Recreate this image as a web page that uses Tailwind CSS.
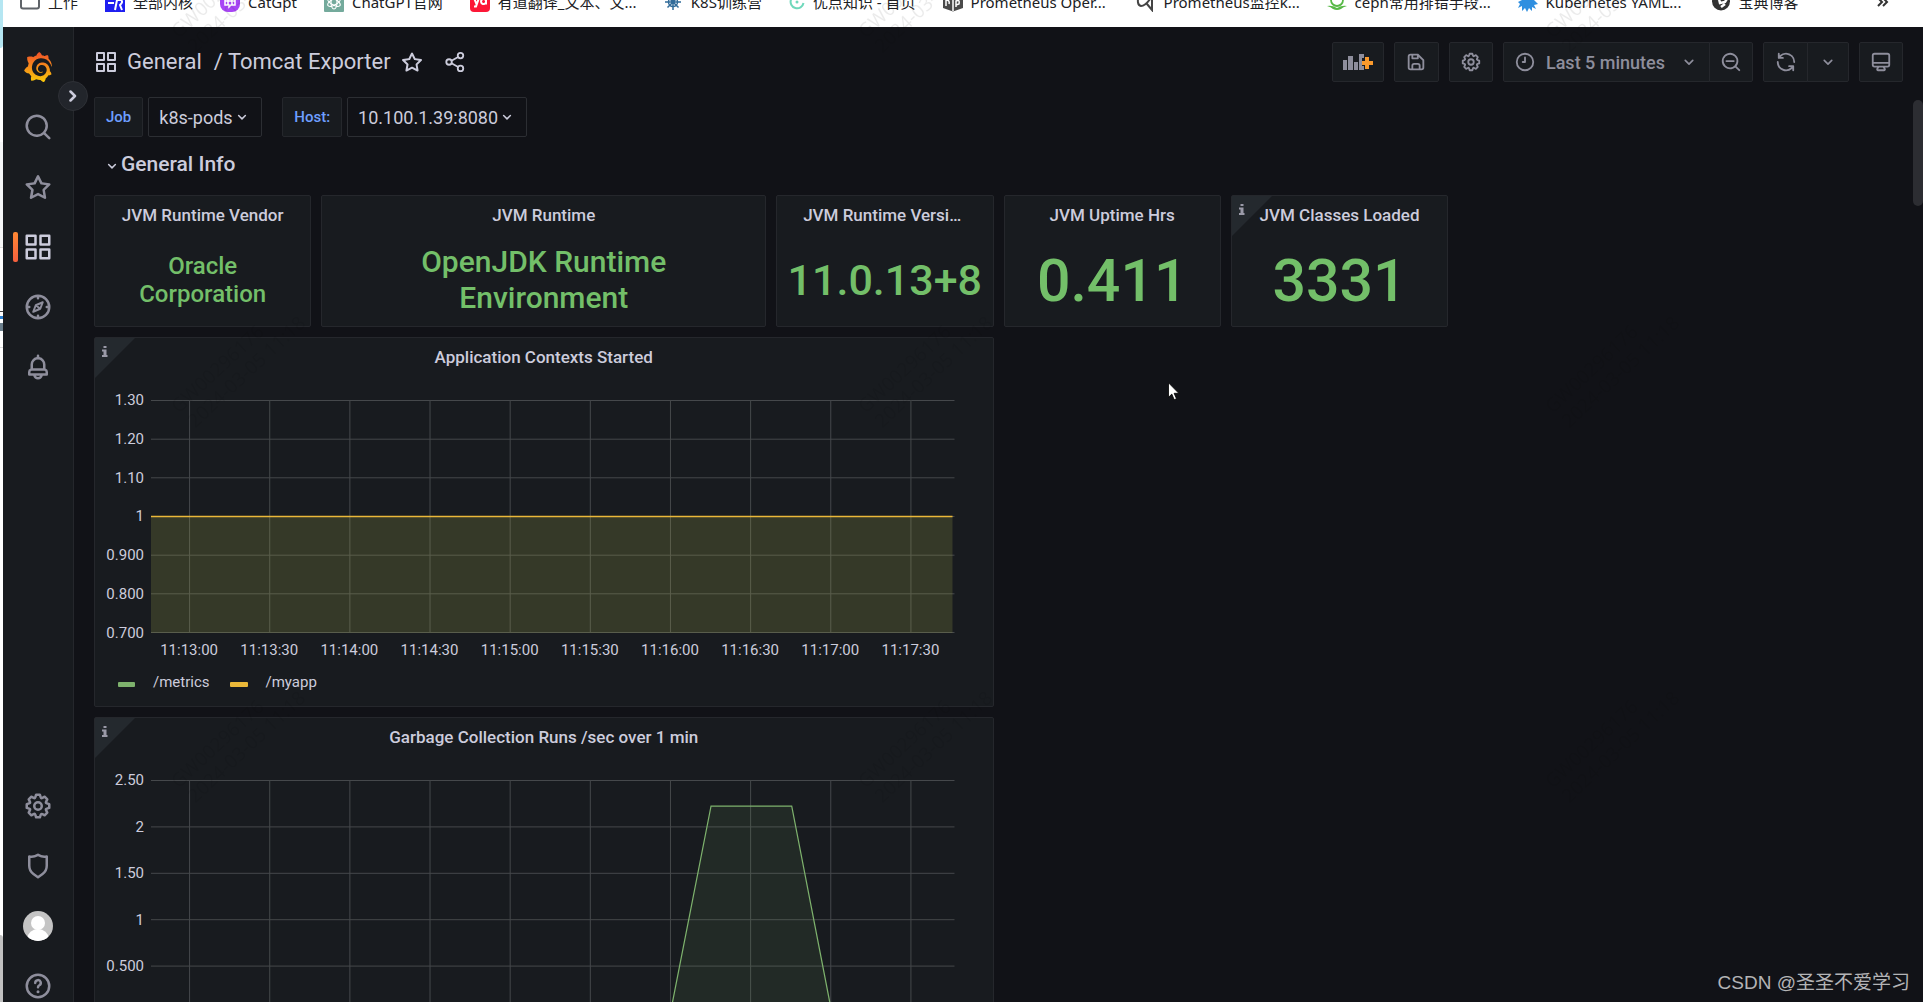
<!DOCTYPE html>
<html lang="en">
<head>
<meta charset="utf-8">
<title>Tomcat Exporter - Grafana</title>
<script src="https://cdn.jsdelivr.net/npm/@tailwindcss/browser@4"></script>
</head>
<body class="relative flex h-screen overflow-hidden bg-[#111217] font-['Roboto','Noto_Sans_CJK_SC',sans-serif] text-[#ccccdc]">

<svg class="hidden" aria-hidden="true">
  <symbol id="apps" viewBox="0 0 24 24"><path d="M10,13H3a1,1,0,0,0-1,1v7a1,1,0,0,0,1,1h7a1,1,0,0,0,1-1V14A1,1,0,0,0,10,13ZM9,20H4V15H9ZM21,2H14a1,1,0,0,0-1,1v7a1,1,0,0,0,1,1h7a1,1,0,0,0,1-1V3A1,1,0,0,0,21,2ZM20,9H15V4h5Zm1,4H14a1,1,0,0,0-1,1v7a1,1,0,0,0,1,1h7a1,1,0,0,0,1-1V14A1,1,0,0,0,21,13Zm-1,7H15V15h5ZM10,2H3A1,1,0,0,0,2,3v7a1,1,0,0,0,1,1h7a1,1,0,0,0,1-1V3A1,1,0,0,0,10,2ZM9,9H4V4H9Z"/></symbol>
  <symbol id="search" viewBox="0 0 24 24"><path d="M21.71,20.29,18,16.61A9,9,0,1,0,16.61,18l3.68,3.68a1,1,0,0,0,1.42,0A1,1,0,0,0,21.71,20.29ZM11,18a7,7,0,1,1,7-7A7,7,0,0,1,11,18Z"/></symbol>
  <symbol id="zoom-out" viewBox="0 0 24 24"><path d="M21.71,20.29,18,16.61A9,9,0,1,0,16.61,18l3.68,3.68a1,1,0,0,0,1.42,0A1,1,0,0,0,21.71,20.29ZM11,18a7,7,0,1,1,7-7A7,7,0,0,1,11,18ZM15,10H7a1,1,0,0,0,0,2h8a1,1,0,0,0,0-2Z"/></symbol>
  <symbol id="star" viewBox="0 0 24 24"><path d="M22,9.67A1,1,0,0,0,21.14,9l-5.69-.83L12.9,3a1,1,0,0,0-1.8,0L8.55,8.16,2.86,9a1,1,0,0,0-.81.68,1,1,0,0,0,.25,1l4.13,4-1,5.68A1,1,0,0,0,6.9,21.44L12,18.77l5.1,2.67a.93.93,0,0,0,.46.12,1,1,0,0,0,.59-.19,1,1,0,0,0,.4-1l-1-5.68,4.13-4A1,1,0,0,0,22,9.67Zm-6.15,4a1,1,0,0,0-.29.88l.72,4.2-3.76-2a1.06,1.06,0,0,0-.94,0l-3.76,2,.72-4.2a1,1,0,0,0-.29-.88l-3-3,4.21-.61a1,1,0,0,0,.76-.55L12,5.7l1.88,3.82a1,1,0,0,0,.76.55l4.21.61Z"/></symbol>
  <symbol id="cog" viewBox="0 0 24 24"><path d="M21.32,9.55l-1.89-.63.89-1.78A1,1,0,0,0,20.13,6L18,3.87a1,1,0,0,0-1.15-.19l-1.78.89-.63-1.89A1,1,0,0,0,13.5,2h-3a1,1,0,0,0-.95.68L8.92,4.57,7.14,3.68A1,1,0,0,0,6,3.87L3.87,6a1,1,0,0,0-.19,1.15l.89,1.78-1.89.63A1,1,0,0,0,2,10.5v3a1,1,0,0,0,.68.95l1.89.63-.89,1.78A1,1,0,0,0,3.87,18L6,20.13a1,1,0,0,0,1.15.19l1.78-.89.63,1.89a1,1,0,0,0,.95.68h3a1,1,0,0,0,.95-.68l.63-1.89,1.78.89A1,1,0,0,0,18,20.13L20.13,18a1,1,0,0,0,.19-1.15l-.89-1.78,1.89-.63A1,1,0,0,0,22,13.5v-3A1,1,0,0,0,21.32,9.55ZM20,12.78l-1.2.4A2,2,0,0,0,17.64,16l.57,1.14-1.1,1.1L16,17.64a2,2,0,0,0-2.79,1.16l-.4,1.2H11.22l-.4-1.2A2,2,0,0,0,8,17.64l-1.14.57-1.1-1.1L6.36,16A2,2,0,0,0,5.2,13.18L4,12.78V11.22l1.2-.4A2,2,0,0,0,6.36,8L5.79,6.89l1.1-1.1L8,6.36A2,2,0,0,0,10.82,5.2l.4-1.2h1.56l.4,1.2A2,2,0,0,0,16,6.36l1.14-.57,1.1,1.1L17.64,8a2,2,0,0,0,1.16,2.79l1.2.4ZM12,8a4,4,0,1,0,4,4A4,4,0,0,0,12,8Zm0,6a2,2,0,1,1,2-2A2,2,0,0,1,12,14Z"/></symbol>
  <symbol id="bell" viewBox="0 0 24 24"><path d="M18,13.18V10a6,6,0,0,0-5-5.91V3a1,1,0,0,0-2,0V4.09A6,6,0,0,0,6,10v3.18A3,3,0,0,0,4,16v2a1,1,0,0,0,1,1H8.14a4,4,0,0,0,7.72,0H19a1,1,0,0,0,1-1V16A3,3,0,0,0,18,13.18ZM8,10a4,4,0,0,1,8,0v3H8Zm4,10a2,2,0,0,1-1.72-1h3.44A2,2,0,0,1,12,20Zm6-3H6V16a1,1,0,0,1,1-1H17a1,1,0,0,1,1,1Z"/></symbol>
  <symbol id="shield" viewBox="0 0 24 24"><path d="M19.63,3.65a1,1,0,0,0-.84-.2,8,8,0,0,1-6.22-1.27,1,1,0,0,0-1.14,0A8,8,0,0,1,5.21,3.45a1,1,0,0,0-.84.2A1,1,0,0,0,4,4.43v7.45a9,9,0,0,0,3.77,7.33l3.65,2.6a1,1,0,0,0,1.16,0l3.65-2.6A9,9,0,0,0,20,11.88V4.43A1,1,0,0,0,19.63,3.65ZM18,11.88a7,7,0,0,1-2.93,5.7L12,19.77,8.93,17.58A7,7,0,0,1,6,11.88V5.58a10,10,0,0,0,6-1.39,10,10,0,0,0,6,1.39Z"/></symbol>
  <symbol id="compass" viewBox="0 0 24 24"><g fill="none" stroke="currentColor" stroke-width="2" stroke-linecap="round" stroke-linejoin="round"><circle cx="12" cy="12" r="9"/><path d="M12 3.500v1.500M12 19v1.500M3.500 12H5M19 12h1.500"/><path stroke-width="1.600" d="M15.800 8.200l-2 5.200-5.600 2.400 2-5.200zM10.200 10.600l3.600 2.800"/></g></symbol>
  <symbol id="question" viewBox="0 0 24 24"><g fill="none" stroke="currentColor" stroke-width="2" stroke-linecap="round"><circle cx="12" cy="12" r="9"/><path d="M9.800 9.500a2.200 2.200 0 1 1 3.300 1.900c-.7.400-1.100.8-1.100 1.600"/></g><circle cx="12" cy="16.500" r="1.200"/></symbol>
  <symbol id="share" viewBox="0 0 24 24"><g fill="none" stroke="currentColor" stroke-width="2"><circle cx="18" cy="5" r="3"/><circle cx="5.500" cy="12" r="3"/><circle cx="18" cy="19" r="3"/><path d="M8.200 10.600l7.200-4.100M8.200 13.400l7.200 4.100"/></g></symbol>
  <symbol id="save" viewBox="0 0 24 24"><path d="M20.710,9.290l-6-6a1,1,0,0,0-.32-.21A1.090,1.090,0,0,0,14,3H6A3,3,0,0,0,3,6V18a3,3,0,0,0,3,3H18a3,3,0,0,0,3-3V10A1,1,0,0,0,20.710,9.290ZM9,5h4V7H9Zm6,14H9V16a1,1,0,0,1,1-1h4a1,1,0,0,1,1,1Zm4-1a1,1,0,0,1-1,1H17V16a3,3,0,0,0-3-3H10a3,3,0,0,0-3,3v3H6a1,1,0,0,1-1-1V6A1,1,0,0,1,6,5H7V8A1,1,0,0,0,8,9h6a1,1,0,0,0,1-1V6.410l4,4Z"/></symbol>
  <symbol id="clock" viewBox="0 0 24 24"><g fill="none" stroke="currentColor" stroke-width="2" stroke-linecap="round" stroke-linejoin="round"><circle cx="12" cy="12" r="9"/><path d="M12 7v5H9.500"/></g></symbol>
  <symbol id="sync" viewBox="0 0 24 24"><path d="M19.910,15.510H15.380a1,1,0,0,0,0,2h2.400A8,8,0,0,1,4,12a1,1,0,0,0-2,0,10,10,0,0,0,16.880,7.230V21a1,1,0,0,0,2,0V16.500A1,1,0,0,0,19.910,15.510ZM12,2A10,10,0,0,0,5.120,4.770V3a1,1,0,0,0-2,0V7.500a1,1,0,0,0,1,1h4.500a1,1,0,0,0,0-2H6.220A8,8,0,0,1,20,12a1,1,0,0,0,2,0A10,10,0,0,0,12,2Z"/></symbol>
  <symbol id="monitor" viewBox="0 0 24 24"><path d="M19,2H5A3,3,0,0,0,2,5V15a3,3,0,0,0,3,3H7.640l-.58,1a2,2,0,0,0,0,2,2,2,0,0,0,1.750,1h6.460A2,2,0,0,0,17,21a2,2,0,0,0,0-2l-.59-1H19a3,3,0,0,0,3-3V5A3,3,0,0,0,19,2ZM8.770,20,10,18H14l1.200,2ZM20,15a1,1,0,0,1-1,1H5a1,1,0,0,1-1-1V14H20Zm0-3H4V5A1,1,0,0,1,5,4H19a1,1,0,0,1,1,1Z"/></symbol>
  <symbol id="chevron" viewBox="0 0 24 24"><path d="M7.500 10l4.500 4.500 4.500-4.500" fill="none" stroke="currentColor" stroke-width="2" stroke-linecap="round" stroke-linejoin="round"/></symbol>
  <symbol id="corner" viewBox="0 0 40 40"><path d="M0 0h40L0 40z" fill="#24292e"/><path d="M8.500 8h3v2h-3zM7 11.500h4.500v5.500h1v2H7v-2h1.500v-3.500H7z" fill="#9a9aa8"/></symbol>
</svg>

<!-- sliver of the window behind -->
<div class="flex w-[3px] shrink-0 flex-col bg-white" aria-hidden="true">
  <div class="h-12 rounded-br-sm bg-[#b5e6f2]"></div>
  <div class="mt-[94px] h-[105px] bg-[#f5f7f7]"></div>
  <div class="h-px bg-[#dddddd]"></div>
  <div class="mt-[63px] h-px bg-[#444444]"></div>
  <div class="mt-1 h-[3px] bg-[#2b7fd0]"></div>
  <div class="mt-1 h-2 bg-[#6b7f8c]"></div>
  <div class="mt-4 h-px bg-[#dddddd]"></div>
  <div class="mt-auto h-[67px] rounded-tr-sm bg-[#c1c1c1]"></div>
</div>

<div class="flex min-w-0 flex-1 flex-col">
  <!-- bookmarks bar, cut by the top edge -->
  <nav aria-label="Bookmarks" class="flex h-[27px] shrink-0 items-start overflow-hidden bg-white pr-[34px] pl-[17px] font-['Noto_Sans','Noto_Sans_CJK_SC',sans-serif] text-[15px] leading-5 text-[#202124]">
    <div class="-mt-2 flex min-w-0 flex-1 items-center gap-[27px] whitespace-nowrap">
      <a href="#" class="flex items-center gap-2"><svg class="size-5" viewBox="0 0 20 20"><rect x="1" y="1" width="18" height="15.500" rx="2" fill="none" stroke="#5f6368" stroke-width="2"/></svg>工作</a>
      <a href="#" class="flex items-center gap-2"><svg class="size-5" viewBox="0 0 20 20"><rect width="20" height="20" fill="#1f1ff0"/><path d="M2 7h8M3 11h6M10 18l2-10h4q2.500 2-1 5l2 5" stroke="#fff" stroke-width="2" fill="none"/></svg>全部内核</a>
      <a href="#" class="flex items-center gap-2"><svg class="size-5" viewBox="0 0 20 20"><rect width="20" height="20" rx="8" fill="#a845f5"/><path d="M5 5h10v8h-4l-2 2v-2H5zM8 5v8M12 5v8M5 9h10" stroke="#fff" stroke-width="1.500" fill="none"/></svg>CatGpt</a>
      <a href="#" class="flex items-center gap-2"><svg class="size-5" viewBox="0 0 20 20"><rect width="20" height="20" rx="1" fill="#74aa9c"/><g fill="none" stroke="#fff" stroke-width="1.200"><ellipse cx="10" cy="10" rx="3" ry="7"/><ellipse cx="10" cy="10" rx="3" ry="7" transform="rotate(60 10 10)"/><ellipse cx="10" cy="10" rx="3" ry="7" transform="rotate(120 10 10)"/></g></svg>ChatGPT官网</a>
      <a href="#" class="flex items-center gap-2"><svg class="size-5" viewBox="0 0 20 20"><rect width="20" height="20" rx="4" fill="#fc1737"/><path d="M4 6l2.500 6M9 6l-3 8.500H4M16 3v9.500M16 9a2.500 2.500 0 1 0 0 1" stroke="#fff" stroke-width="2" fill="none"/></svg><span class="w-[138px]">有道翻译_文本、文...</span></a>
      <a href="#" class="flex items-center gap-2"><svg class="size-5" viewBox="0 0 20 20"><g stroke="#326c9a" stroke-width="1.500" fill="none"><circle cx="10" cy="10" r="4.500"/><path d="M10 2v16M2 10h16M4.500 4.500l11 11M15.500 4.500l-11 11"/></g></svg>K8S训练营</a>
      <a href="#" class="flex items-center gap-2"><svg class="size-4" viewBox="0 0 16 16"><path d="M11 2A6.500 6.500 0 1 0 14.500 9" fill="none" stroke="#6fd8bb" stroke-width="2"/><circle cx="8" cy="8" r="1.500" fill="#6fd8bb"/></svg>优点知识 - 首页</a>
      <a href="#" class="flex items-center gap-2"><svg class="size-5" viewBox="0 0 20 20"><path d="M0 3l10 3 10-3v13l-10 3.500L0 16z" fill="#4a4a4a"/><path d="M3 14V8q4 0 3 4M10 7v12M13 15V9q4-2 3 3l-3 1" stroke="#fff" stroke-width="1.500" fill="none"/></svg><span class="w-[138px]">Prometheus Oper...</span></a>
      <a href="#" class="flex items-center gap-2"><svg class="size-5" viewBox="0 0 20 20"><path d="M3 2q-3 11 2 12Q10 14 16 4v14l-5-6" fill="none" stroke="#444" stroke-width="2"/></svg><span class="w-[136px]">Prometheus监控k...</span></a>
      <a href="#" class="flex items-center gap-2"><svg class="size-5" viewBox="0 0 20 20"><circle cx="10" cy="8" r="6" fill="none" stroke="#58b947" stroke-width="1.800"/><path d="M0 14q5-1 10 2 5-3 10-2-4 1-6 3-4 2-8 0-2-2-6-3z" fill="#58b947"/></svg><span class="w-[136px]">ceph常用排错手段...</span></a>
      <a href="#" class="flex items-center gap-2"><svg class="size-5" viewBox="0 0 20 20"><path d="M4 0h12v8l4 4-4 1 2 4-4-2 0 4-3-3-2 4-2-4-3 3v-5l-4 2 2-4-2-2 4-2z" fill="#2f8fe0"/></svg><span class="w-[138px]">Kubernetes YAML...</span></a>
      <a href="#" class="flex items-center gap-2"><svg class="size-5" viewBox="0 0 20 20"><circle cx="10" cy="9.500" r="9" fill="#333"/><path d="M2 6l6 1 1 4 5-1 3-5M10 15l4-3" stroke="#fff" stroke-width="2.500" fill="none"/></svg>宝典博客</a>
    </div>
    <button aria-label="More bookmarks" class="-mt-2"><svg class="h-5 w-3" viewBox="0 0 12 20" fill="none" stroke="#333" stroke-width="2"><path d="M1 6l4 4-4 4M6 6l4 4-4 4"/></svg></button>
  </nav>

  <div class="flex min-h-0 flex-1">
    <!-- side menu -->
    <nav aria-label="Main menu" class="relative flex w-[71px] shrink-0 flex-col items-center justify-between border-r border-[#25272c] bg-[#181b1f] text-[#8e8e9c]">
      <div class="flex w-full flex-col items-center pt-[10px]">
        <a href="#" aria-label="Home" class="flex h-[60px] w-full items-center justify-center"><svg class="size-[30px]" viewBox="0 0 24 24"><defs><linearGradient id="lg" x1="0" y1="0" x2="0" y2="1"><stop offset="0" stop-color="#f0502a"/><stop offset="1" stop-color="#fbca0a"/></linearGradient></defs><path fill="url(#lg)" d="M23.02 10.59a8.578 8.578 0 0 0-.862-3.034 8.911 8.911 0 0 0-1.789-2.445c.337-1.342-.413-2.505-.413-2.505-1.292-.08-2.113.4-2.416.62-.052-.02-.102-.044-.154-.064-.22-.089-.446-.172-.677-.247-.231-.073-.47-.14-.711-.197a9.867 9.867 0 0 0-.875-.161C14.557.753 12.94 0 12.94 0c-1.804 1.145-2.147 2.744-2.147 2.744l-.018.093c-.098.029-.2.057-.298.088-.138.042-.275.094-.413.143-.138.055-.275.107-.41.166a8.869 8.869 0 0 0-1.557.87l-.063-.029c-2.497-.955-4.716.195-4.716.195-.203 2.658.996 4.33 1.235 4.636a11.608 11.608 0 0 0-.607 2.635C1.636 12.677.953 15.014.953 15.014c1.926 2.214 4.171 2.351 4.171 2.351.003-.002.006-.002.006-.005.285.509.615.994.986 1.446.156.19.32.371.488.548-.704 2.009.099 3.68.099 3.68 2.144.08 3.553-.937 3.849-1.173a9.784 9.784 0 0 0 3.164.501h.08l.055-.003.107-.002.103-.005.003.002c1.01 1.44 2.788 1.646 2.788 1.646 1.264-1.332 1.337-2.653 1.337-2.94v-.058c0-.02-.003-.039-.003-.06.265-.187.52-.387.758-.6a7.875 7.875 0 0 0 1.415-1.7c1.43.083 2.437-.885 2.437-.885-.236-1.49-1.085-2.216-1.264-2.354l-.018-.013-.016-.013a.217.217 0 0 1-.031-.02c.008-.092.016-.18.02-.27.011-.162.016-.323.016-.48v-.253l-.005-.098-.008-.135a1.891 1.891 0 0 0-.01-.13c-.003-.042-.008-.083-.013-.125l-.016-.124-.018-.122a6.215 6.215 0 0 0-2.032-3.73 6.015 6.015 0 0 0-3.222-1.46 6.292 6.292 0 0 0-.85-.048l-.107.002h-.063l-.044.003-.104.008a4.777 4.777 0 0 0-3.335 1.695c-.332.4-.592.84-.768 1.297a4.594 4.594 0 0 0-.312 1.817l.003.091c.005.055.007.11.013.164a3.615 3.615 0 0 0 .698 1.82 3.53 3.53 0 0 0 1.827 1.282c.33.098.66.14.971.137.039 0 .078 0 .114-.002l.063-.003c.02 0 .041-.003.062-.003.034-.002.065-.007.099-.01.007 0 .018-.003.028-.003l.031-.005.06-.008a1.18 1.18 0 0 0 .112-.02c.036-.008.072-.013.109-.024a2.634 2.634 0 0 0 .914-.415c.028-.02.056-.041.085-.065a.248.248 0 0 0 .039-.35.244.244 0 0 0-.309-.06l-.078.042c-.09.044-.184.083-.283.116a2.476 2.476 0 0 1-.475.096c-.028.003-.054.006-.083.006l-.083.002c-.026 0-.054 0-.08-.002l-.102-.006h-.012l-.024.006c-.016-.003-.031-.003-.044-.006-.031-.002-.06-.007-.091-.01a2.59 2.59 0 0 1-.724-.213 2.557 2.557 0 0 1-.667-.438 2.52 2.52 0 0 1-.805-1.475 2.306 2.306 0 0 1-.029-.444l.006-.122v-.023l.002-.031c.003-.021.003-.04.005-.06a3.163 3.163 0 0 1 1.352-2.29 3.12 3.12 0 0 1 .937-.43 2.946 2.946 0 0 1 .776-.101h.06l.07.002.045.003h.026l.07.005a4.041 4.041 0 0 1 1.635.49 3.94 3.94 0 0 1 1.602 1.662 3.77 3.77 0 0 1 .397 1.414l.005.076.003.075c.002.026.002.05.002.075 0 .024.003.052 0 .07v.065l-.002.073-.008.174a6.195 6.195 0 0 1-.08.639 5.1 5.1 0 0 1-.267.927 5.31 5.31 0 0 1-.624 1.13 5.052 5.052 0 0 1-3.237 2.014 4.82 4.82 0 0 1-.649.066l-.039.003h-.287a6.607 6.607 0 0 1-1.716-.265 6.776 6.776 0 0 1-3.4-2.274 6.75 6.75 0 0 1-.746-1.15 6.616 6.616 0 0 1-.714-2.596l-.005-.083-.002-.02v-.056l-.003-.073v-.096l-.003-.104v-.07l.003-.163c.008-.22.026-.45.054-.678a8.707 8.707 0 0 1 .28-1.355c.128-.444.286-.872.473-1.277a7.04 7.04 0 0 1 1.456-2.1 5.925 5.925 0 0 1 .953-.763c.169-.111.343-.213.524-.306.089-.05.182-.091.273-.135.047-.02.093-.042.138-.062a7.177 7.177 0 0 1 .714-.267l.145-.045c.049-.015.098-.026.148-.041.098-.029.197-.052.296-.076.049-.013.1-.02.15-.033l.15-.032.151-.028.076-.013.075-.01.153-.024c.057-.01.114-.013.171-.023l.169-.021c.036-.003.073-.008.106-.01l.073-.008.036-.003.042-.002c.057-.003.114-.008.171-.01l.086-.006h.023l.037-.003.145-.007a7.999 7.999 0 0 1 1.708.125 7.917 7.917 0 0 1 2.048.68 8.253 8.253 0 0 1 1.672 1.09l.09.077.089.078c.06.052.114.107.171.159.057.052.112.106.166.16.052.055.107.107.159.164a8.671 8.671 0 0 1 1.41 1.978c.012.026.028.052.04.078l.04.078.075.156c.023.051.05.1.07.153l.065.15a8.848 8.848 0 0 1 .45 1.34.19.19 0 0 0 .201.142.186.186 0 0 0 .172-.184c.01-.246.002-.532-.024-.856z"/></svg></a>
        <a href="#" aria-label="Search" class="flex h-[60px] w-full items-center justify-center"><svg class="size-[30px] fill-current"><use href="#search"/></svg></a>
        <a href="#" aria-label="Starred" class="flex h-[60px] w-full items-center justify-center"><svg class="size-[30px] fill-current"><use href="#star"/></svg></a>
        <a href="#" aria-label="Dashboards" class="relative flex h-[60px] w-full items-center justify-center text-[#ccccdc]"><span class="absolute top-[15px] left-[10px] h-[30px] w-[5px] rounded-xs bg-linear-to-b from-[#ff8833] to-[#f55f3e]"></span><svg class="size-[30px] fill-current"><use href="#apps"/></svg></a>
        <a href="#" aria-label="Explore" class="flex h-[60px] w-full items-center justify-center"><svg class="size-[30px] fill-current"><use href="#compass"/></svg></a>
        <a href="#" aria-label="Alerting" class="flex h-[60px] w-full items-center justify-center"><svg class="size-[30px] fill-current"><use href="#bell"/></svg></a>
      </div>
      <div class="-mb-[14px] flex w-full flex-col items-center">
        <a href="#" aria-label="Configuration" class="flex h-[60px] w-full items-center justify-center"><svg class="size-[30px] fill-current"><use href="#cog"/></svg></a>
        <a href="#" aria-label="Server admin" class="flex h-[60px] w-full items-center justify-center"><svg class="size-[30px] fill-current"><use href="#shield"/></svg></a>
        <a href="#" aria-label="Profile" class="flex h-[60px] w-full items-center justify-center"><svg class="size-[30px] rounded-full" viewBox="0 0 30 30"><rect width="30" height="30" fill="#c4c4c4"/><circle cx="15" cy="12" r="7" fill="#fff"/><ellipse cx="15" cy="27" rx="10.500" ry="9" fill="#fff"/></svg></a>
        <a href="#" aria-label="Help" class="flex h-[60px] w-full items-center justify-center"><svg class="size-[30px] fill-current"><use href="#question"/></svg></a>
      </div>
      <button aria-label="Expand menu" class="absolute top-[54px] -right-[15px] z-10 flex size-[30px] items-center justify-center rounded-full border border-[#2e3036] bg-[#22252b] text-[#ccccdc]"><svg class="h-3 w-2" viewBox="0 0 8 12" fill="none" stroke="currentColor" stroke-width="2.500" stroke-linecap="round" stroke-linejoin="round"><path d="M1.500 1.500L6 6l-4.500 4.500"/></svg></button>
    </nav>

    <main class="flex min-w-0 flex-1 flex-col px-5">
      <header class="flex h-[70px] shrink-0 items-center justify-between">
        <div class="flex items-center text-[22px] leading-7">
          <svg class="size-6 fill-current"><use href="#apps"/></svg>
          <h1 class="ml-[9px] flex"><a href="#" class="mr-3">General</a><a href="#">/ Tomcat Exporter</a></h1>
          <button aria-label="Mark as favorite" class="ml-[9px]"><svg class="size-6 fill-current"><use href="#star"/></svg></button>
          <button aria-label="Share dashboard" class="ml-5"><svg class="size-[22px] fill-current"><use href="#share"/></svg></button>
        </div>
        <div class="flex h-10 gap-[10px] text-[#8e8e9c]">
          <button aria-label="Add panel" class="flex w-[52px] items-center justify-center rounded-xs border border-[#25272c] bg-[#181b1f]"><svg class="h-5 w-[30px]" viewBox="0 0 30 20"><path fill="#8e8e9c" d="M0 8h4v10H0zM5 4h5v14H5zM11 10h4v8h-4zM16 2h5v4h-2v8h2v4h-5z"/><path fill="#fa9a2c" d="M22 5h4v4h4v4h-4v4h-4v-4h-3V9h3z"/></svg></button>
          <button aria-label="Save dashboard" class="flex w-[45px] items-center justify-center rounded-xs border border-[#25272c] bg-[#181b1f]"><svg class="size-[22px] fill-current"><use href="#save"/></svg></button>
          <button aria-label="Dashboard settings" class="flex w-11 items-center justify-center rounded-xs border border-[#25272c] bg-[#181b1f]"><svg class="size-[22px] fill-current"><use href="#cog"/></svg></button>
          <div class="flex">
            <button class="flex items-center rounded-l-xs border border-[#25272c] bg-[#181b1f] px-[10px] text-[18px] font-medium"><svg class="size-[22px] fill-current"><use href="#clock"/></svg><span class="mr-[14px] ml-[10px]">Last 5 minutes</span><svg class="size-5"><use href="#chevron"/></svg></button>
            <button aria-label="Zoom out" class="-ml-px flex w-11 items-center justify-center rounded-r-xs border border-[#25272c] bg-[#181b1f]"><svg class="size-[22px] fill-current"><use href="#zoom-out"/></svg></button>
          </div>
          <div class="flex">
            <button aria-label="Refresh" class="flex w-[45px] items-center justify-center rounded-l-xs border border-[#25272c] bg-[#181b1f]"><svg class="size-[22px] fill-current"><use href="#sync"/></svg></button>
            <button aria-label="Refresh interval" class="-ml-px flex w-[42px] items-center justify-center rounded-r-xs border border-[#25272c] bg-[#181b1f]"><svg class="size-5"><use href="#chevron"/></svg></button>
          </div>
          <button aria-label="Cycle view mode" class="flex w-11 items-center justify-center rounded-xs border border-[#25272c] bg-[#181b1f]"><svg class="size-[22px] fill-current"><use href="#monitor"/></svg></button>
        </div>
      </header>

      <div class="flex h-10 shrink-0 gap-5">
        <div class="flex gap-[5px]">
          <label for="job" class="flex items-center rounded-xs border border-[#25272c] bg-[#181b1f] px-[11px] text-[15px] font-medium text-[#6e9fff]">Job</label>
          <div class="flex items-center rounded-xs border border-[#2c2e33] px-[10px]"><select id="job" class="appearance-none bg-transparent text-[18px] outline-none"><option>k8s-pods</option></select><svg class="pointer-events-none size-[18px]" aria-hidden="true"><use href="#chevron"/></svg></div>
        </div>
        <div class="flex gap-[5px]">
          <label for="host" class="flex items-center rounded-xs border border-[#25272c] bg-[#181b1f] px-[11px] text-[15px] font-medium text-[#6e9fff]">Host:</label>
          <div class="flex items-center rounded-xs border border-[#2c2e33] px-[10px]"><select id="host" class="appearance-none bg-transparent text-[18px] outline-none"><option>10.100.1.39:8080</option></select><svg class="pointer-events-none size-[18px]" aria-hidden="true"><use href="#chevron"/></svg></div>
        </div>
      </div>

      <button class="flex h-[58px] shrink-0 items-center pb-0.5 pl-[9px] text-left text-[21px] font-medium"><svg class="mt-0.5 size-[18px]"><use href="#chevron"/></svg>General Info</button>

      <div class="grid grid-cols-8 gap-[10px] text-[17px]">
        <section class="flex h-[132px] flex-col rounded-xs border border-[#25272c] bg-[#181b1f] text-center">
          <h2 class="h-[38px] truncate px-[26px] leading-[38px] font-medium">JVM Runtime Vendor</h2>
          <p class="flex flex-1 items-center justify-center text-[24px] leading-7 font-medium text-[#73bf69]">Oracle<br>Corporation</p>
        </section>
        <section class="col-span-2 flex h-[132px] flex-col rounded-xs border border-[#25272c] bg-[#181b1f] text-center">
          <h2 class="h-[38px] truncate px-[26px] leading-[38px] font-medium">JVM Runtime</h2>
          <p class="flex flex-1 items-center justify-center text-[30px] leading-9 font-medium text-[#73bf69]">OpenJDK Runtime<br>Environment</p>
        </section>
        <section class="flex h-[132px] flex-col rounded-xs border border-[#25272c] bg-[#181b1f] text-center">
          <h2 class="h-[38px] truncate px-[26px] leading-[38px] font-medium">JVM Runtime Version</h2>
          <p class="flex flex-1 items-center justify-center text-[43px] leading-none font-medium text-[#73bf69]">11.0.13+8</p>
        </section>
        <section class="flex h-[132px] flex-col rounded-xs border border-[#25272c] bg-[#181b1f] text-center">
          <h2 class="h-[38px] truncate px-[26px] leading-[38px] font-medium">JVM Uptime Hrs</h2>
          <p class="flex flex-1 items-center justify-center text-[59px] leading-none font-medium text-[#73bf69]">0.411</p>
        </section>
        <section class="relative flex h-[132px] flex-col rounded-xs border border-[#25272c] bg-[#181b1f] text-center">
          <svg class="absolute top-0 left-0 size-10" aria-hidden="true"><use href="#corner"/></svg>
          <h2 class="relative h-[38px] truncate px-[26px] leading-[38px] font-medium">JVM Classes Loaded</h2>
          <p class="flex flex-1 items-center justify-center text-[59px] leading-none font-medium text-[#73bf69]">3331</p>
        </section>

        <section class="relative col-span-4 col-start-1 h-[370px] rounded-xs border border-[#25272c] bg-[#181b1f]">
          <svg class="absolute top-0 left-0 size-10" aria-hidden="true"><use href="#corner"/></svg>
          <h2 class="h-[38px] text-center leading-[38px] font-medium">Application Contexts Started</h2>
          <div class="mt-4 flex pr-[38px] text-[15px] leading-4">
            <div class="mr-[7px] flex h-[249px] w-[49px] flex-col justify-between text-right"><span>1.30</span><span>1.20</span><span>1.10</span><span>1</span><span>0.900</span><span>0.800</span><span>0.700</span></div>
            <div class="min-w-0 flex-1 pt-2">
              <svg class="h-[233px] w-full" viewBox="0 0 802 233" preserveAspectRatio="none">
                <path d="M0 .5H802M0 39.200H802M0 77.800H802M0 116.500H802M0 155.200H802M0 193.800H802M0 232.500H802M38.500 0V233M118.500 0V233M198.500 0V233M278.500 0V233M358.500 0V233M438.500 0V233M518.500 0V233M598.500 0V233M678.500 0V233M758.500 0V233" stroke="#45484b" fill="none" shape-rendering="crispEdges" vector-effect="non-scaling-stroke"/>
                <path d="M0 116H800V233H0z" fill="#73bf69" fill-opacity=".1"/>
                <path d="M0 116H800V233H0z" fill="#eab839" fill-opacity=".1"/>
                <path d="M0 116.500H800" stroke="#eab839" stroke-width="1.300" vector-effect="non-scaling-stroke"/>
              </svg>
              <div class="mt-[9px] mr-1 -ml-0.5 grid grid-cols-10 text-center"><span>11:13:00</span><span>11:13:30</span><span>11:14:00</span><span>11:14:30</span><span>11:15:00</span><span>11:15:30</span><span>11:16:00</span><span>11:16:30</span><span>11:17:00</span><span>11:17:30</span></div>
            </div>
          </div>
          <div class="mt-4 flex gap-5 pl-[23px] text-[15px] leading-4">
            <button class="flex items-center gap-[18px]"><span class="mt-1 h-[5px] w-[17px] rounded-[1px] bg-[#7eb26d]"></span>/metrics</button>
            <button class="flex items-center gap-[18px]"><span class="mt-1 h-[5px] w-[18px] rounded-[1px] bg-[#eab839]"></span>/myapp</button>
          </div>
        </section>

        <section class="relative col-span-4 col-start-1 h-[370px] rounded-xs border border-[#25272c] bg-[#181b1f]">
          <svg class="absolute top-0 left-0 size-10" aria-hidden="true"><use href="#corner"/></svg>
          <h2 class="h-[38px] text-center leading-[38px] font-medium">Garbage Collection Runs /sec over 1 min</h2>
          <div class="mt-4 flex pr-[38px] text-[15px] leading-4">
            <div class="mr-[7px] flex h-[249px] w-[49px] flex-col justify-between text-right"><span>2.50</span><span>2</span><span>1.50</span><span>1</span><span>0.500</span><span>0</span></div>
            <div class="min-w-0 flex-1 pt-2">
              <svg class="h-[233px] w-full" viewBox="0 0 802 233" preserveAspectRatio="none">
                <path d="M0 .5H802M0 46.900H802M0 93.300H802M0 139.700H802M0 186.100H802M0 232.500H802M38.500 0V233M118.500 0V233M198.500 0V233M278.500 0V233M358.500 0V233M438.500 0V233M518.500 0V233M598.500 0V233M678.500 0V233M758.500 0V233" stroke="#45484b" fill="none" shape-rendering="crispEdges" vector-effect="non-scaling-stroke"/>
                <path d="M518.500 232.500L559 26H639.500L679.500 232.500z" fill="#7eb26d" fill-opacity=".1"/>
                <path d="M0 232.500H518.500L559 26H639.500L679.500 232.500H800" stroke="#7eb26d" stroke-width="1.250" fill="none" vector-effect="non-scaling-stroke"/>
              </svg>
            </div>
          </div>
        </section>
      </div>
    </main>
  </div>
</div>

<!-- page scrollbar thumb -->
<div class="absolute top-[100px] right-0 h-[106px] w-[10px] rounded-full bg-[#2c2d32]" aria-hidden="true"></div>

<!-- tiled screen watermark -->
<svg class="pointer-events-none absolute inset-0 size-full" aria-hidden="true">
  <defs><pattern id="wm" x="160" y="-80" width="687" height="375" patternUnits="userSpaceOnUse">
    <g transform="rotate(-43 16 116)" font-family="Open Sans, sans-serif" font-size="19" fill="#000" fill-opacity=".08"><text x="16" y="120">GW00296176</text><text x="18" y="142">2024-03-05 11:18</text></g>
  </pattern></defs>
  <rect width="100%" height="100%" fill="url(#wm)"/>
</svg>

<!-- pointer -->
<svg class="pointer-events-none absolute top-[382px] left-[1168px] h-[19px] w-3" viewBox="0 0 12 19" aria-hidden="true"><path d="M.5.800v14.500l3.300-3.200 2.400 5.600 2.300-1-2.400-5.400h4.700z" fill="#fff" stroke="#000" stroke-width=".8"/></svg>

<p class="absolute right-[13px] bottom-[5px] font-['Liberation_Sans','Noto_Sans_CJK_SC',sans-serif] text-[19px] leading-7 text-[#b4b4b6]">CSDN @圣圣不爱学习</p>
</body>
</html>
